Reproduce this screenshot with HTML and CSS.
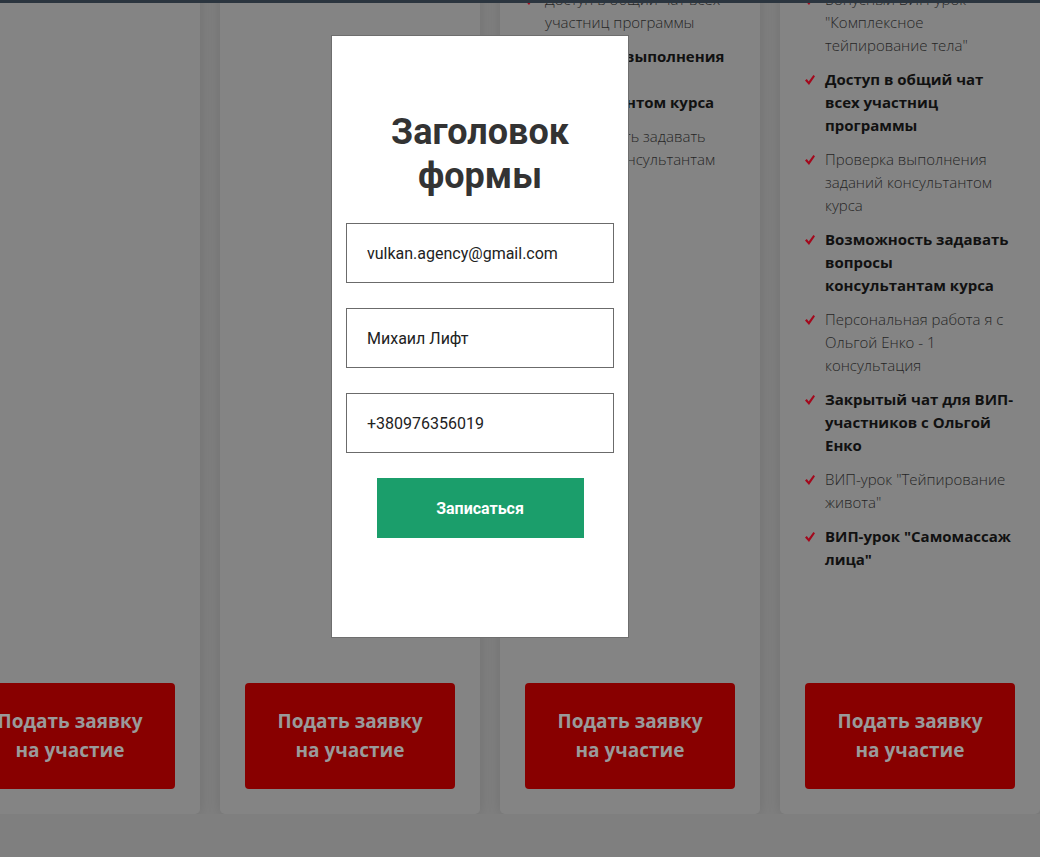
FILE: index.html
```html
<!DOCTYPE html>
<html lang="ru">
<head>
    <meta charset="UTF-8">
    <title>Форма записи</title>
    <meta name="viewport" content="width=device-width, initial-scale=1.0">
    <link rel="stylesheet" href="styles.css">
</head>
<body>
<div class="topbar"></div>

<div class="plans">
    <div class="plan">
        <ul class="plan-list"></ul>
        <a class="plan-btn" href="#">Подать заявку<br>на участие</a>
    </div>
    <div class="plan">
        <ul class="plan-list"></ul>
        <a class="plan-btn" href="#">Подать заявку<br>на участие</a>
    </div>
    <div class="plan">
        <ul class="plan-list">
            <li><svg class="tick" viewBox="0 0 10 10"><path d="M0 5.4 L1.8 4 L3.7 6.4 L8.4 0 L10 1.2 L4 10 Z"/></svg><span>Доступ в общий чат всех участниц программы</span></li>
            <li class="strong"><svg class="tick" viewBox="0 0 10 10"><path d="M0 5.4 L1.8 4 L3.7 6.4 L8.4 0 L10 1.2 L4 10 Z"/></svg><span>Проверка выполнения заданий консультантом курса</span></li>
            <li><svg class="tick" viewBox="0 0 10 10"><path d="M0 5.4 L1.8 4 L3.7 6.4 L8.4 0 L10 1.2 L4 10 Z"/></svg><span>Возможность задавать вопросы консультантам курса</span></li>
        </ul>
        <a class="plan-btn" href="#">Подать заявку<br>на участие</a>
    </div>
    <div class="plan">
        <ul class="plan-list">
            <li><svg class="tick" viewBox="0 0 10 10"><path d="M0 5.4 L1.8 4 L3.7 6.4 L8.4 0 L10 1.2 L4 10 Z"/></svg><span>Бонусный ВИП-урок "Комплексное тейпирование тела"</span></li>
            <li class="strong"><svg class="tick" viewBox="0 0 10 10"><path d="M0 5.4 L1.8 4 L3.7 6.4 L8.4 0 L10 1.2 L4 10 Z"/></svg><span>Доступ в общий чат всех участниц программы</span></li>
            <li><svg class="tick" viewBox="0 0 10 10"><path d="M0 5.4 L1.8 4 L3.7 6.4 L8.4 0 L10 1.2 L4 10 Z"/></svg><span>Проверка выполнения заданий консультантом курса</span></li>
            <li class="strong"><svg class="tick" viewBox="0 0 10 10"><path d="M0 5.4 L1.8 4 L3.7 6.4 L8.4 0 L10 1.2 L4 10 Z"/></svg><span>Возможность задавать вопросы консультантам курса</span></li>
            <li><svg class="tick" viewBox="0 0 10 10"><path d="M0 5.4 L1.8 4 L3.7 6.4 L8.4 0 L10 1.2 L4 10 Z"/></svg><span>Персональная работа я с Ольгой Енко - 1 консультация</span></li>
            <li class="strong"><svg class="tick" viewBox="0 0 10 10"><path d="M0 5.4 L1.8 4 L3.7 6.4 L8.4 0 L10 1.2 L4 10 Z"/></svg><span>Закрытый чат для ВИП-участников с Ольгой Енко</span></li>
            <li><svg class="tick" viewBox="0 0 10 10"><path d="M0 5.4 L1.8 4 L3.7 6.4 L8.4 0 L10 1.2 L4 10 Z"/></svg><span>ВИП-урок "Тейпирование живота"</span></li>
            <li class="strong"><svg class="tick" viewBox="0 0 10 10"><path d="M0 5.4 L1.8 4 L3.7 6.4 L8.4 0 L10 1.2 L4 10 Z"/></svg><span>ВИП-урок "Самомассаж лица"</span></li>
        </ul>
        <a class="plan-btn" href="#">Подать заявку<br>на участие</a>
    </div>
</div>

<div class="modal">
    <h2 class="modal-title">Заголовок формы</h2>
    <form class="modal-form">
        <input class="field" type="email" value="vulkan.agency@gmail.com">
        <input class="field" type="text" value="Михаил Лифт">
        <input class="field" type="tel" value="+380976356019">
        <button class="submit" type="button">Записаться</button>
    </form>
</div>
</body>
</html>
```

FILE: styles.css
```css
body {
    margin: 0;
    background: #7f7f7f;
    font-family: "Open Sans", "Liberation Sans", sans-serif;
    overflow: hidden;
}

.topbar {
    position: fixed;
    top: 0;
    left: 0;
    right: 0;
    height: 3px;
    background: #2b353f;
    z-index: 5;
}

.plans {
    display: flex;
    gap: 20px;
    margin: -12px 0 0 -60px;
}

.plan {
    flex: none;
    width: 260px;
    min-height: 826px;
    box-sizing: border-box;
    padding: 0 25px 25px;
    background: #848484;
    border-radius: 0 0 5px 5px;
    box-shadow: 0 0 14px rgba(0, 0, 0, 0.12);
    display: flex;
    flex-direction: column;
}

.plan-list {
    list-style: none;
    margin: 0;
    padding: 0;
    display: flex;
    flex-direction: column;
    gap: 11px;
}

.plan-list li {
    display: flex;
    gap: 10px;
    font-size: 15px;
    line-height: 23px;
    font-weight: 300;
    color: #262626;
}

.plan-list li.strong {
    font-weight: 700;
    color: #111;
}

.tick {
    flex: none;
    width: 10px;
    height: 10px;
    margin-top: 7px;
    fill: #a3081c;
}

.plan-btn {
    margin-top: auto;
    display: block;
    padding: 24px 0;
    background: #880000;
    border-radius: 4px;
    color: #9a9a9a;
    text-align: center;
    text-decoration: none;
    font-size: 19px;
    line-height: 29px;
    font-weight: 700;
}

.modal {
    position: fixed;
    top: 35px;
    left: 331px;
    width: 298px;
    height: 603px;
    box-sizing: border-box;
    padding: 74px 14px 0;
    background: #fff;
    border: 1px solid #6e6e6e;
    font-family: Roboto, "Liberation Sans", sans-serif;
    z-index: 10;
}

.modal-title {
    margin: 0 0 25px;
    text-align: center;
    font-size: 36px;
    line-height: 44px;
    font-weight: 700;
    color: #333;
}

.modal-form {
    display: flex;
    flex-direction: column;
    gap: 25px;
}

.field {
    height: 60px;
    box-sizing: border-box;
    padding: 0 20px;
    border: 1px solid #6b6b6b;
    border-radius: 0;
    font-family: inherit;
    font-size: 16px;
    color: #222;
    outline: none;
}

.submit {
    align-self: center;
    width: 207px;
    height: 60px;
    border: 0;
    background: #1b9e6b;
    color: #fff;
    font-family: inherit;
    font-size: 16px;
    font-weight: 700;
}
```
